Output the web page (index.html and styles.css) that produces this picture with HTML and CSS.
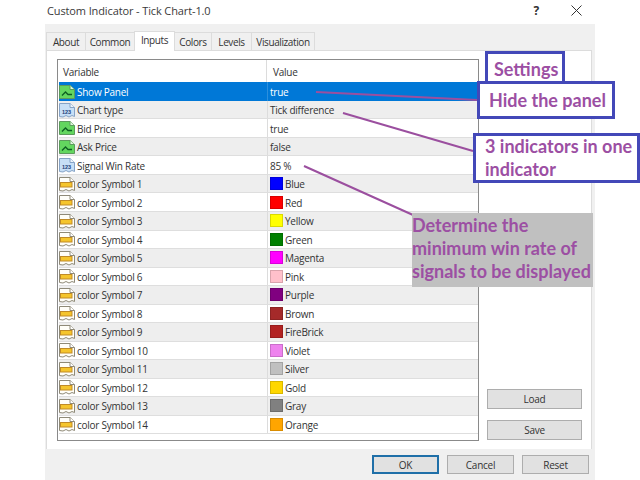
FILE: index.html
```html
<!DOCTYPE html>
<html lang="en">
<head>
<meta charset="utf-8">
<title>Custom Indicator - Tick Chart-1.0</title>
<link rel="stylesheet" href="styles.css">
</head>
<body>
<svg class="defs" width="0" height="0" aria-hidden="true">
  <symbol id="i-chart" viewBox="0 0 16 16">
    <path d="M.5 1.5H11L15.5 5.5V14.5H.5Z" fill="#63d65f" stroke="#5c9a5c"/>
    <path d="M11 1.5V5.5H15.5" fill="#dff5dc" stroke="#5c9a5c"/>
    <path d="M3 11.5L6.5 8L9 10.5H13" fill="none" stroke="#0d5f22" stroke-width="1.3"/>
  </symbol>
  <symbol id="i-num" viewBox="0 0 16 16">
    <path d="M.5 1.5H11L15.5 5.5V14.5L13 13.5L10 15L7 13.5L4 15L.5 14.5Z" fill="#c7dff6" stroke="#86a3c6"/>
    <path d="M11 1.5V5.5H15.5" fill="#eef5fc" stroke="#86a3c6"/>
  </symbol>
  <symbol id="i-color" viewBox="0 0 16 16">
    <path d="M.5 1.5H11L15.5 5.5V14.5L13 13.5L10 15L7 13.5L4 15L.5 14.5Z" fill="#fffef8" stroke="#8f8a78"/>
    <path d="M11 1.5V5.5H15.5" fill="#fff" stroke="#8f8a78"/>
    <rect x="1.5" y="6.5" width="11.5" height="4.5" fill="#f5c52c" stroke="#c08a26"/>
  </symbol>
</svg>

<header class="titlebar">
  <span class="title">Custom Indicator - Tick Chart-1.0</span>
  <span class="help">?</span>
  <svg class="close" width="11" height="11" viewBox="0 0 11 11"><path d="M.5.5L10.5 10.5M10.5.5L.5 10.5" stroke="#333" fill="none"/></svg>
</header>

<main class="dialog">
  <nav class="tabs">
    <span class="tab tab-about">About</span>
    <span class="tab tab-common">Common</span>
    <span class="tab tab-inputs">Inputs</span>
    <span class="tab tab-colors">Colors</span>
    <span class="tab tab-levels">Levels</span>
    <span class="tab tab-vis">Visualization</span>
  </nav>
  <section class="pane">
    <div class="list">
      <div class="row head"><div class="c1">Variable</div><div class="c2">Value</div></div>
      <div class="row sel"><div class="c1"><svg class="ico"><use href="#i-chart"/></svg>Show Panel</div><div class="c2">true</div></div>
      <div class="row alt"><div class="c1"><svg class="ico" viewBox="0 0 16 16"><use href="#i-num"/><text class="num-text" x="7.5" y="11.5" text-anchor="middle">123</text></svg>Chart type</div><div class="c2">Tick difference</div></div>
      <div class="row"><div class="c1"><svg class="ico"><use href="#i-chart"/></svg>Bid Price</div><div class="c2">true</div></div>
      <div class="row alt"><div class="c1"><svg class="ico"><use href="#i-chart"/></svg>Ask Price</div><div class="c2">false</div></div>
      <div class="row"><div class="c1"><svg class="ico" viewBox="0 0 16 16"><use href="#i-num"/><text class="num-text" x="7.5" y="11.5" text-anchor="middle">123</text></svg>Signal Win Rate</div><div class="c2">85 %</div></div>
      <div class="row alt"><div class="c1"><svg class="ico"><use href="#i-color"/></svg>color Symbol 1</div><div class="c2"><i class="sw blue"></i>Blue</div></div>
      <div class="row"><div class="c1"><svg class="ico"><use href="#i-color"/></svg>color Symbol 2</div><div class="c2"><i class="sw red"></i>Red</div></div>
      <div class="row alt"><div class="c1"><svg class="ico"><use href="#i-color"/></svg>color Symbol 3</div><div class="c2"><i class="sw yellow"></i>Yellow</div></div>
      <div class="row"><div class="c1"><svg class="ico"><use href="#i-color"/></svg>color Symbol 4</div><div class="c2"><i class="sw green"></i>Green</div></div>
      <div class="row alt"><div class="c1"><svg class="ico"><use href="#i-color"/></svg>color Symbol 5</div><div class="c2"><i class="sw magenta"></i>Magenta</div></div>
      <div class="row"><div class="c1"><svg class="ico"><use href="#i-color"/></svg>color Symbol 6</div><div class="c2"><i class="sw pink"></i>Pink</div></div>
      <div class="row alt"><div class="c1"><svg class="ico"><use href="#i-color"/></svg>color Symbol 7</div><div class="c2"><i class="sw purple"></i>Purple</div></div>
      <div class="row"><div class="c1"><svg class="ico"><use href="#i-color"/></svg>color Symbol 8</div><div class="c2"><i class="sw brown"></i>Brown</div></div>
      <div class="row alt"><div class="c1"><svg class="ico"><use href="#i-color"/></svg>color Symbol 9</div><div class="c2"><i class="sw firebrick"></i>FireBrick</div></div>
      <div class="row"><div class="c1"><svg class="ico"><use href="#i-color"/></svg>color Symbol 10</div><div class="c2"><i class="sw violet"></i>Violet</div></div>
      <div class="row alt"><div class="c1"><svg class="ico"><use href="#i-color"/></svg>color Symbol 11</div><div class="c2"><i class="sw silver"></i>Silver</div></div>
      <div class="row"><div class="c1"><svg class="ico"><use href="#i-color"/></svg>color Symbol 12</div><div class="c2"><i class="sw gold"></i>Gold</div></div>
      <div class="row alt"><div class="c1"><svg class="ico"><use href="#i-color"/></svg>color Symbol 13</div><div class="c2"><i class="sw gray"></i>Gray</div></div>
      <div class="row"><div class="c1"><svg class="ico"><use href="#i-color"/></svg>color Symbol 14</div><div class="c2"><i class="sw orange"></i>Orange</div></div>
    </div>
    <div class="side">
      <button class="btn side-btn">Load</button>
      <button class="btn side-btn">Save</button>
    </div>
  </section>
  <footer class="actions">
    <button class="btn act ok">OK</button>
    <button class="btn act">Cancel</button>
    <button class="btn act">Reset</button>
  </footer>
</main>

<svg class="arrows" width="640" height="480" viewBox="0 0 640 480" aria-hidden="true">
  <path d="M316 92L477 100M343 113L473 151M304 166L413 215" stroke="#9b4f9f" stroke-width="2" fill="none"/>
</svg>
<div class="note n-settings">Settings</div>
<div class="note n-hide">Hide the panel</div>
<div class="note n-three">3 indicators in one indicator</div>
<div class="note n-win">Determine the minimum win rate of signals to be displayed</div>
</body>
</html>
```

FILE: styles.css
```css
* { box-sizing: border-box; }
html, body { margin: 0; padding: 0; }
body {
  width: 640px;
  height: 480px;
  overflow: hidden;
  position: relative;
  background: #fff;
  font-family: "Open Sans", Roboto, sans-serif;
  font-size: 10px;
  letter-spacing: -.25px;
  color: #333;
}
.defs { position: absolute; }
.num-text { font: bold 5.5px "Liberation Sans", sans-serif; letter-spacing: 0; fill: #1c3f7a; }

.titlebar {
  height: 24px;
  display: flex;
  align-items: center;
  padding-left: 47px;
}
.title { font-size: 11px; letter-spacing: -.12px; color: #3a3a3a; flex: 1; margin-top: -3px; }
.help { font-size: 12px; font-weight: bold; color: #333; margin-right: 32px; margin-top: -4px; }
.close { margin-right: 58px; margin-top: -4px; }

.dialog {
  margin-left: 45px;
  width: 550px;
  height: 456px;
  background: #f0f0f0;
  padding: 7px 0 0 1px;
}
.tabs { display: flex; height: 19px; align-items: flex-end; }
.tab {
  height: 18px;
  display: flex;
  align-items: center;
  justify-content: center;
  background: #f0f0f0;
  border: 1px solid #dcdcdc;
  border-bottom: 0;
  margin-right: -1px;
  letter-spacing: -.4px;
}
.tab-about { width: 40px; }
.tab-common { width: 50px; }
.tab-inputs { width: 41px; height: 20px; background: #fff; position: relative; z-index: 1; padding-bottom: 3px; margin-bottom: -1px; }
.tab-colors { width: 38px; }
.tab-levels { width: 41px; }
.tab-vis { width: 64px; }

.pane {
  width: 546px;
  height: 399px;
  background: #fff;
  border: 1px solid #dcdcdc;
  border-bottom: 0;
  display: flex;
  padding: 8px 0 0 10px;
}
.list {
  width: 422px;
  height: 382px;
  border: 1px solid #8a8a8a;
  background: #fff;
  display: grid;
  grid-template-rows: 22.4px repeat(19, 18.53px);
  align-content: start;
}
.row {
  display: grid;
  grid-template-columns: 208px 1fr;
  align-items: stretch;
  border-bottom: 1px solid #dedede;
  margin-left: 1px;
  min-height: 0;
}
.row.alt { background: #eeeeee; }
.row.head { border-bottom: 0; margin-left: 0; }
.row.sel { background: #0078d7; color: #fff; border-bottom: 0; }
.c1, .c2 { display: flex; align-items: center; white-space: nowrap; min-width: 0; padding-top: 1px; }
.c2 { padding-left: 2px; border-left: 1px solid #dcdcdc; }
.head .c1 { padding-left: 5px; }
.head .c2 { padding-left: 6px; }
.sel .c2 { border-left-color: #2c8fdd; }
.ico { width: 16px; height: 16px; margin-right: 2px; flex: none; margin-top: -1px; }

.sw {
  display: block;
  width: 13px;
  height: 13px;
  margin-right: 2px;
  margin-top: -1px;
  flex: none;
  border: 1px solid rgba(0, 0, 0, .15);
}
.blue { background: #0000ff; }
.red { background: #ff0000; }
.yellow { background: #ffff00; }
.green { background: #008000; }
.magenta { background: #ff00ff; }
.pink { background: #ffc0cb; }
.purple { background: #800080; }
.brown { background: #a52a2a; }
.firebrick { background: #b22222; }
.violet { background: #ee82ee; }
.silver { background: #c0c0c0; }
.gold { background: #ffd700; }
.gray { background: #808080; }
.orange { background: #ffa500; }

.side {
  margin-left: 8px;
  width: 95px;
  padding-top: 330px;
  display: flex;
  flex-direction: column;
  gap: 11px;
}
.btn {
  font: 10px "Open Sans", Roboto, sans-serif;
  letter-spacing: -.25px;
  color: #333;
  background: #e1e1e1;
  border: 1px solid #adadad;
  padding: 0;
}
.side-btn { width: 95px; height: 20px; }

.actions {
  display: flex;
  gap: 8px;
  padding: 6px 0 0 326px;
}
.act { width: 67px; height: 19px; }
.ok { border: 2px solid #1f6fa8; }

.arrows { position: absolute; left: 0; top: 0; pointer-events: none; }
.note {
  position: absolute;
  font-family: Lato, "Liberation Sans", sans-serif;
  font-weight: bold;
  font-size: 18px;
  letter-spacing: 0;
  color: #9c4fa3;
}
.n-settings, .n-hide, .n-three {
  background: #fff;
  border: 3px solid #4348b8;
  display: flex;
  align-items: center;
}
.n-settings { left: 485px; top: 51px; width: 80px; height: 33px; padding: 2px 0 0 6px; }
.n-hide { left: 477px; top: 81px; width: 138px; height: 38px; padding-left: 9px; }
.n-three { left: 473px; top: 133px; width: 167px; height: 50px; padding-left: 9px; line-height: 23px; }
.n-win {
  left: 412px;
  top: 213px;
  width: 181px;
  height: 74px;
  background: #c0c0c0;
  padding-top: 1px;
  line-height: 23px;
}
```
